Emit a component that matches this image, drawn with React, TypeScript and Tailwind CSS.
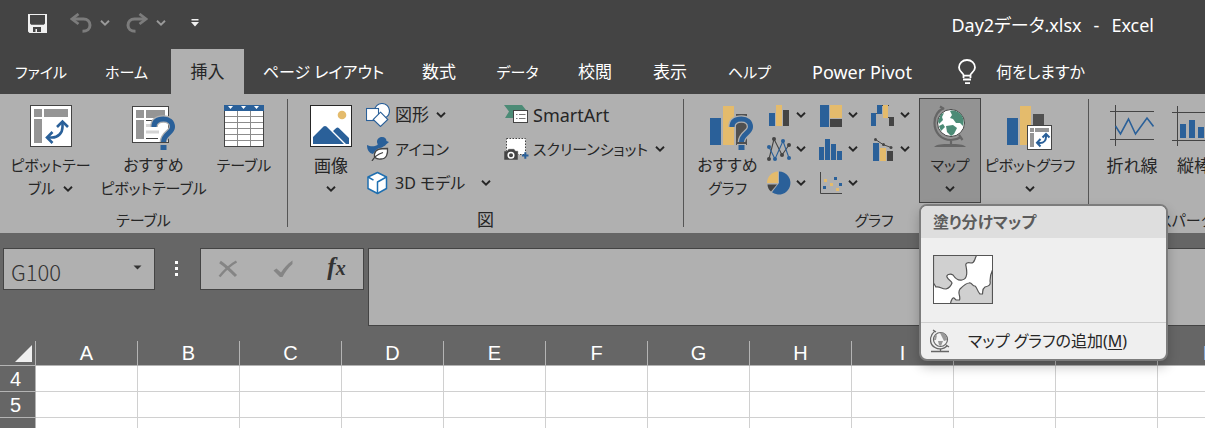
import type { ReactNode } from "react";

const INK = "#262626";
const BLUE = "#2a6099";
const GOLD = "#e4bb6c";
const DARK = "#444444";

function Chevron({ color = INK }: { color?: string }) {
  return (
    <svg width="10" height="6" viewBox="0 0 10 6" fill="none" stroke={color} strokeWidth="1.9" aria-hidden="true">
      <path d="M1 0.8 5 4.6 9 0.8" />
    </svg>
  );
}

/* ---------- title bar icons ---------- */

function SaveIcon() {
  return (
    <svg width="19" height="19" viewBox="0 0 19 19" aria-hidden="true">
      <path fill="#f0f0f0" fillRule="evenodd" d="M0 0H19V19H1.5L0 17.5ZM2 1V9.5L3.2 10.7H15.8L17 9.5V1ZM5 13V18H7.5V15H9V18H13V13Z" />
    </svg>
  );
}

function UndoIcon({ flip = false }: { flip?: boolean }) {
  return (
    <svg width="22" height="20" viewBox="0 0 22 20" fill="none" stroke="#7c7c7c" strokeWidth="3" className={flip ? "-scale-x-100" : ""} aria-hidden="true">
      <path d="M8.5 1 2 6 8.5 11" strokeWidth="2.8" />
      <path d="M2 6H13.5C17.5 6 20 8.7 20 12.2C20 15.7 17.3 18.2 12.5 18.2" />
    </svg>
  );
}

function CustomizeIcon() {
  return (
    <svg width="8" height="8" viewBox="0 0 8 8" fill="#f0f0f0" aria-hidden="true">
      <path d="M0.5 0H7.5V1.4H0.5ZM0 3H8L4 7.5Z" />
    </svg>
  );
}

function BulbIcon() {
  return (
    <svg width="20" height="26" viewBox="0 0 20 26" fill="none" stroke="#fff" strokeWidth="1.8" aria-hidden="true">
      <path d="M6.5 19V16C6.5 14 2 12.5 2 8.5A8 7.5 0 0 1 18 8.5C18 12.5 13.5 14 13.5 16V19" />
      <path d="M6 16.7H14M6 20.5H14M8 24.2H13" />
    </svg>
  );
}

/* ---------- large ribbon icons ---------- */

function PivotTableIcon() {
  return (
    <svg width="42" height="42" viewBox="0 0 42 42" aria-hidden="true">
      <rect x="0.5" y="0.5" width="41" height="41" fill="#fff" stroke={DARK} />
      <path fill="#959595" d="M4 4H12V12H4ZM14 4H38V12H14ZM4 14H12V38H4Z" />
      <g stroke={BLUE} fill="none" strokeWidth="2.6">
        <path d="M17.5 32.5H22C28 32.5 32.5 28 32.5 22V18" />
        <path d="M22.500 27 17 32.500 22.500 38M27 22 32.500 16.500 38 22" />
      </g>
    </svg>
  );
}

function Question() {
  return (
    <>
      <path d="M22 22C22 16 26 14 31.500 14C37 14 40.500 17 40.500 22C40.500 28 31.500 29 31.500 37" fill="none" stroke="#b0b0b0" strokeWidth="7.600" />
      <path d="M27 39H36V46H27Z" fill="#b0b0b0" />
      <path d="M22 22C22 16 26 14 31.500 14C37 14 40.500 17 40.500 22C40.500 28 31.500 29 31.500 37" fill="none" stroke={BLUE} strokeWidth="5" />
      <path d="M28.500 40H34.500V45H28.500Z" fill={BLUE} />
    </>
  );
}

function RecommendedPivotIcon() {
  return (
    <svg width="44" height="46" viewBox="0 0 44 46" aria-hidden="true">
      <rect x="0.500" y="1.500" width="36" height="36" fill="#fff" stroke={DARK} />
      <path fill="#959595" d="M4 5H12V13H4ZM14 5H33V13H14ZM4 15H12V34H4Z" />
      <path d="M14 15.500H22M14 33.500H26" stroke={DARK} />
      <path d="M14 20.500H21M14 27H27" stroke="#d4d4d4" strokeWidth="3" />
      <Question />
    </svg>
  );
}

function TableIcon() {
  return (
    <svg width="40" height="42" viewBox="0 0 40 42" aria-hidden="true">
      <rect x="0.500" y="0.500" width="39" height="41" fill="#fff" stroke={DARK} />
      <path fill={BLUE} d="M0 0H40V6H0Z" />
      <path fill="#fff" d="M4 1H9L6.500 4ZM17 1H22L19.500 4ZM30 1H35L32.500 4Z" />
      <path d="M1 11.500H39M1 17.500H39M1 23.500H39M1 29.500H39M1 35.500H39M13.500 6V41M26.500 6V41" stroke="#8c8c8c" />
    </svg>
  );
}

function PictureIcon() {
  return (
    <svg width="42" height="42" viewBox="0 0 42 42" aria-hidden="true">
      <rect x="0.500" y="0.500" width="41" height="41" fill="#fff" stroke={INK} />
      <circle cx="32" cy="10" r="4.300" fill={GOLD} />
      <path fill={BLUE} d="M3 39V32L13.500 21.500Q15 20.300 16.500 21.500L34 39ZM23 26 26 23.200Q27.500 22 29 23.200L39 33V39H36Z" />
    </svg>
  );
}

function RecommendedChartIcon() {
  return (
    <svg width="44" height="46" viewBox="0 0 44 46" className="ml-2" aria-hidden="true">
      <path fill={BLUE} d="M0 13H11V40H0Z" />
      <path fill={GOLD} d="M13 1H24V40H13Z" />
      <path fill="#505050" d="M26 9H37V40H26Z" />
      <Question />
    </svg>
  );
}

function GlobeIcon() {
  return (
    <svg width="34" height="43" viewBox="0 0 34 43" aria-hidden="true">
      <g fill="none" stroke="#666" strokeWidth="2.200">
        <path d="M11 3C4 6 1.500 12 1.500 18C1.500 28 8.500 35 18 35C22 35 25 34 28 32M7 1.500 11 4M26 30 29.500 35M18 35V40" />
      </g>
      <path d="M1 42C4 39 9 39 17 39C25 39 30 39 33 42Z" fill="#666" />
      <circle cx="18" cy="18" r="13.500" fill="#fff" stroke={DARK} />
      <g fill="#4c8b76">
        <path d="M17 6C21 4.500 26 7 28.500 10C31 14 31 17 30 21L27 18L23 18L20 14L17 13L19 10Z" />
        <path d="M8 9 11 8 9 12 10 15 6 19 5 16Z" />
        <path d="M6 21 10 19 12 22 8 26Z" />
        <path d="M13 21 20 20 24 23 21 29 18 31 14 27Z" />
      </g>
    </svg>
  );
}

function PivotChartIcon() {
  return (
    <svg width="46" height="46" viewBox="0 0 46 46" aria-hidden="true">
      <path fill={BLUE} d="M0 13H11V40H0Z" />
      <path fill={GOLD} d="M13 1H24V40H13Z" />
      <path fill="#505050" d="M26 9H37V20H26Z" />
      <rect x="20.500" y="20.500" width="24" height="24" fill="#fff" stroke={DARK} />
      <path fill="#959595" d="M23 23H27V27H23ZM28 23H42V27H28ZM23 28H27V42H23Z" />
      <g fill="none" stroke={BLUE} strokeWidth="2">
        <path d="M31 38H33C37 38 39 35 39 32V30" />
        <path d="M33.500 34 30 37.800 33.500 41.500M35.500 32.500 39 29 42.500 32.500" />
      </g>
    </svg>
  );
}

function LineSparkIcon() {
  return (
    <svg width="44" height="42" viewBox="0 0 44 42" fill="none" aria-hidden="true">
      <path d="M5.500 0V41M0 6.500H44M0 34.500H44" stroke={DARK} />
      <path d="M5.500 21 10.500 29 18.500 14 25.500 29 37 13 43.500 21.500" stroke={BLUE} strokeWidth="1.600" />
    </svg>
  );
}

function ColumnSparkIcon() {
  return (
    <svg width="44" height="42" viewBox="0 0 44 42" fill="none" aria-hidden="true">
      <path d="M5.500 1V41M0 7.500H44M0 35.500H44" stroke={DARK} />
      <path fill={BLUE} d="M8 19H14V33H8ZM17 15H23V33H17ZM26 22H32V33H26ZM35 17H41V33H35Z" />
    </svg>
  );
}

/* ---------- small ribbon icons ---------- */

function ShapesIcon() {
  return (
    <svg width="24" height="24" viewBox="0 0 24 24" fill="#fff" stroke={BLUE} strokeWidth="1.100" aria-hidden="true">
      <circle cx="16" cy="8" r="7.500" />
      <rect x="0.500" y="5.500" width="12" height="12" />
      <path d="M14.500 9.200 21.800 16.500 14.500 23.500 7.200 16.500Z" />
    </svg>
  );
}

function IconsIcon() {
  return (
    <svg width="24" height="24" viewBox="0 0 24 24" aria-hidden="true">
      <path fill={BLUE} d="M11 5C11 1.500 13.500 0 16 0C19 0 20.500 2 20.500 4L23 5L20 7.500C19 9 18 9 16 10.500C10 11 8 16 7 17C3 16 1 13 1 8C4 9.500 8 10 11.500 8C12 7 11 6 11 5Z" />
      <path d="M21.500 11.500C22 17 20.500 22 15 22C9 22.500 8 20 8.500 17C9.500 12 14 11.500 21.500 11.500Z" fill="#fff" stroke={DARK} strokeWidth="1.300" />
      <path d="M6 24C8 20 11 17.500 17 15.500" fill="none" stroke={DARK} strokeWidth="1.300" />
    </svg>
  );
}

function CubeIcon() {
  return (
    <svg width="24" height="24" viewBox="0 0 24 24" fill="#fff" stroke="#1f6fb0" strokeWidth="1.500" strokeLinejoin="round" aria-hidden="true">
      <path d="M11.500 1.500 20.500 6V17.500L11.500 22.500 2 17.500V6Z" />
      <path d="M2 6 7.500 9.200M20.500 6 11.500 11V22.500" fill="none" />
    </svg>
  );
}

function SmartArtIcon() {
  return (
    <svg width="25" height="22" viewBox="0 0 25 22" aria-hidden="true">
      <path fill="#4c8b76" d="M0 1H18L22 6H9V14H1L5 7.500Z" />
      <rect x="9.500" y="6.500" width="14" height="12" fill="#fff" stroke={DARK} />
      <path d="M12 10.500H13.500M15 10.500H21.500M12 14.500H13.500M15 14.500H21.500" stroke="#777" />
    </svg>
  );
}

function ScreenshotIcon() {
  return (
    <svg width="25" height="24" viewBox="0 0 25 24" aria-hidden="true">
      <rect x="2.500" y="1.500" width="19" height="16" fill="#fff" stroke={DARK} strokeDasharray="1.500 1.500" />
      <path fill={DARK} d="M0 14H3L4.500 12H10L11.500 14H14V23H0Z" stroke="#b0b0b0" strokeWidth="0.500" />
      <circle cx="7" cy="18.300" r="2.800" fill="none" stroke="#fff" strokeWidth="1.500" />
      <path d="M18 18.500H24.500M21.300 15.300V21.700" stroke={BLUE} strokeWidth="2" />
    </svg>
  );
}

function ColumnChartIcon() {
  return (
    <svg width="24" height="24" viewBox="0 0 24 24" aria-hidden="true">
      <path fill={BLUE} d="M2 10H8V23H2Z" />
      <path fill={GOLD} d="M9 2H15V23H9Z" />
      <path fill={DARK} d="M16 7H22V23H16Z" />
    </svg>
  );
}

function TreemapIcon() {
  return (
    <svg width="24" height="24" viewBox="0 0 24 24" aria-hidden="true">
      <path fill={BLUE} d="M1 2H10V24H1Z" />
      <path fill={GOLD} d="M11 2H23V15H11Z" />
      <path fill={DARK} d="M11 16H23V24H11Z" />
    </svg>
  );
}

function WaterfallIcon() {
  return (
    <svg width="24" height="24" viewBox="0 0 24 24" aria-hidden="true">
      <path d="M5.500 10V10.500H11M10 2.500H18M17 14.500H20" stroke={DARK} />
      <path fill={BLUE} d="M0 10H5V23H0ZM6 2H11V11H6Z" />
      <path fill={GOLD} d="M12 2H17V15H12Z" />
      <path fill={DARK} d="M18 14H23V23H18Z" />
    </svg>
  );
}

function LineChartIcon() {
  return (
    <svg width="24" height="24" viewBox="0 0 24 24" aria-hidden="true">
      <path d="M2 22 7 2 15 18 22 8" fill="none" stroke={DARK} strokeWidth="1.100" />
      <path d="M2 10 8 22 16 4 22 21" fill="none" stroke={BLUE} strokeWidth="1.100" />
      <g fill={DARK}>
        <circle cx="2" cy="22" r="2" /><circle cx="7" cy="2" r="2" /><circle cx="15" cy="18" r="2" /><circle cx="22" cy="8" r="2" />
      </g>
      <g fill={BLUE}>
        <circle cx="2" cy="10" r="2" /><circle cx="8" cy="22" r="2" /><circle cx="16" cy="4" r="2" /><circle cx="22" cy="21" r="2" />
      </g>
    </svg>
  );
}

function HistogramIcon() {
  return (
    <svg width="24" height="24" viewBox="0 0 24 24" aria-hidden="true">
      <path fill={BLUE} d="M0 10H5V23H0ZM6 2H11V23H6ZM12 7H17V23H12ZM18 14H23V23H18Z" />
    </svg>
  );
}

function ComboIcon() {
  return (
    <svg width="24" height="24" viewBox="0 0 24 24" aria-hidden="true">
      <path fill={BLUE} d="M2 6H8V24H2Z" />
      <path fill={GOLD} d="M9 11H15V24H9Z" />
      <path fill={DARK} d="M16 14H22V24H16Z" />
      <path d="M4.500 2.500 12 7.500 20 10.500" fill="none" stroke={DARK} />
      <g fill={DARK}>
        <circle cx="4.500" cy="2.500" r="1.500" /><circle cx="12.500" cy="7.500" r="1.500" /><circle cx="20" cy="10.500" r="1.500" />
      </g>
    </svg>
  );
}

function PieIcon() {
  return (
    <svg width="24" height="24" viewBox="0 0 24 24" aria-hidden="true">
      <path fill={BLUE} d="M12 12V0.500A11.500 11.500 0 1 1 5 21.200Z" />
      <path fill={GOLD} d="M11 12H0A11.500 11.500 0 0 1 11 0.500Z" />
      <path fill={DARK} d="M10 13.500 4 20.500C1.500 18.500 0.500 16 0.500 13.500Z" />
    </svg>
  );
}

function ScatterIcon() {
  return (
    <svg width="24" height="24" viewBox="0 0 24 24" aria-hidden="true">
      <path d="M1.500 1V22.500H23" fill="none" stroke={DARK} />
      <path fill={BLUE} d="M15 6H18V9H15ZM20 12H23V15H20ZM4 15H7V18H4Z" />
      <path fill={GOLD} d="M5 8H8V11H5ZM11 12H14V15H11ZM17 17H20V20H17Z" />
    </svg>
  );
}

/* ---------- menu drawings ---------- */

function MapThumb() {
  return (
    <svg width="60" height="49" viewBox="0 0 60 49" aria-hidden="true">
      <rect x="0.500" y="0.500" width="59" height="48" fill="#fff" />
      <g fill="#d0d0d0" stroke="#555" strokeWidth="1.200">
        <path d="M0.500 0.500H43.500C41 5 42 8 38 8C35 7 32 8 33 11C34 16 35 24 29 25C25 26 22 23 20 20C17 18 13 20 14 22C15 25 19 26 19 28C18 31 16 33 13 34C8 34 7 31 3 32L0.500 28Z" />
        <path d="M17.500 48.500C18 45 20 42 21 43L23 45L26.500 45C28 41 24 38 27 34C30 31 33 28 36 28C39 27 39 31 42 31C44 32 44 36 47 39L49.500 39C50 36 49 34 52 32C56 31 58 30 57 26C57 22 57 20 59.500 15V48.500Z" />
      </g>
      <rect x="0.500" y="0.500" width="59" height="48" fill="none" stroke="#555" />
    </svg>
  );
}

function SmallGlobe() {
  return (
    <svg width="20" height="24" viewBox="0 0 20 24" aria-hidden="true">
      <path d="M5 2C-1 7-1 15 5 18.500C9 21 14 20 17 17M3 1 6 3M16 16 19 18M10.500 20V22M1 22.500H19" fill="none" stroke="#666" strokeWidth="1.300" />
      <circle cx="10.500" cy="10.500" r="7" fill="#f4f4f4" stroke="#666" strokeWidth="1.200" />
      <path fill="#999" d="M10 4C14 3 17 7 17 11L14 12L12 8ZM5 7 7 6 6 11 4 11ZM8 12H13L11 17 9 16Z" />
    </svg>
  );
}

/* ---------- ribbon building blocks ---------- */

function labelSize(label: string) {
  if (/^[A-Za-z ]+$/.test(label)) return "text-[18px]";
  if (/[\u4e00-\u9fff]/.test(label)) return "text-[17px]";
  if (/^[\u30a0-\u30ff]+$/.test(label)) return "text-[15px]";
  return "text-[16px]";
}

function Group({ label, className, labelClass = "", children }: { label: string; className: string; labelClass?: string; children: ReactNode }) {
  return (
    <section aria-label={label} className={`flex shrink-0 flex-col ${className}`}>
      <div className="flex h-[110px] items-start">{children}</div>
      <div className={`text-center leading-6 ${labelSize(label)} ${labelClass}`}>{label}</div>
    </section>
  );
}

function Separator() {
  return <div className="mt-[5px] h-[128px] w-px shrink-0 bg-[#555]" />;
}

function BigButton({ icon, lines, className, arrow }: { icon: ReactNode; lines: string[]; className: string; arrow?: "inline" | "below" }) {
  return (
    <button type="button" className={`flex shrink-0 flex-col items-center whitespace-nowrap ${className}`}>
      <span className="flex h-[49px] items-start">{icon}</span>
      {lines.map((line, i) => (
        <span key={line} className={`flex h-[23px] items-center gap-2 leading-[23px] ${labelSize(line)}`}>
          {line}
          {arrow === "inline" && i === lines.length - 1 && <Chevron />}
        </span>
      ))}
      {arrow === "below" && <span className="flex h-[23px] items-center"><Chevron /></span>}
    </button>
  );
}

function SmallButton({ icon, label, arrow }: { icon: ReactNode; label: string; arrow?: "near" | "far" }) {
  return (
    <button type="button" className="flex h-[34px] items-center gap-1 whitespace-nowrap">
      <span className="flex w-[25px] justify-start">{icon}</span>
      <span className={labelSize(label)}>{label}</span>
      {arrow && <span className={arrow === "far" ? "pl-3" : "pl-[3px]"}><Chevron /></span>}
    </button>
  );
}

const chartButtons: { name: string; icon: ReactNode }[] = [
  { name: "縦棒", icon: <ColumnChartIcon /> },
  { name: "階層構造", icon: <TreemapIcon /> },
  { name: "ウォーターフォール", icon: <WaterfallIcon /> },
  { name: "折れ線", icon: <LineChartIcon /> },
  { name: "統計", icon: <HistogramIcon /> },
  { name: "複合", icon: <ComboIcon /> },
  { name: "円", icon: <PieIcon /> },
  { name: "散布図", icon: <ScatterIcon /> },
];

const tabs = [
  { name: "ファイル", width: "w-[82px]" },
  { name: "ホーム", width: "w-[89px]" },
  { name: "挿入", width: "w-[73px]", active: true },
  { name: "ページ レイアウト", width: "w-[159px]" },
  { name: "数式", width: "w-[72px]" },
  { name: "データ", width: "w-[85px]" },
  { name: "校閲", width: "w-[70px]" },
  { name: "表示", width: "w-[80px]" },
  { name: "ヘルプ", width: "w-[79px]" },
  { name: "Power Pivot", width: "w-[146px]" },
];

function TitleBar() {
  return (
    <header className="flex h-[49px] items-center justify-between pl-7 pr-[51px] text-white">
      <div className="flex items-center pb-[3px]">
        <button type="button" aria-label="上書き保存"><SaveIcon /></button>
        <button type="button" aria-label="元に戻す" className="ml-[23px] flex items-center gap-2"><UndoIcon /><Chevron color="#9a9a9a" /></button>
        <button type="button" aria-label="やり直し" className="ml-4 flex items-center gap-2"><UndoIcon flip /><Chevron color="#9a9a9a" /></button>
        <button type="button" aria-label="クイック アクセス ツール バーのユーザー設定" className="ml-[25px]"><CustomizeIcon /></button>
      </div>
      <h1 className="flex gap-3 text-[18px]"><span>Day2データ.xlsx</span><span>-</span><span>Excel</span></h1>
    </header>
  );
}

function TabBar() {
  return (
    <nav className="flex h-[45px] whitespace-nowrap text-white">
      {tabs.map((tab) => (
        <button
          key={tab.name}
          type="button"
          className={`shrink-0 text-center ${labelSize(tab.name)} ${tab.width} ${tab.active ? "bg-[#b0b0b0] text-[#262626]" : ""}`}
        >
          {tab.name}
        </button>
      ))}
      <button type="button" className="ml-[22px] flex shrink-0 items-center gap-[19px]"><BulbIcon />何をしますか</button>
    </nav>
  );
}

function MapMenu() {
  return (
    <div className="absolute left-0 top-full z-10 mt-px w-[249px] overflow-hidden rounded-lg border-2 border-[#7c7c7c] bg-[#efefef] text-left shadow-[0_6px_12px_rgba(0,0,0,0.22)]">
      <h2 className="bg-[#dedede] px-3 font-bold leading-8 text-[#5c5c5c]">塗り分けマップ</h2>
      <div className="flex h-[84px] items-start px-3 pt-[17px]">
        <button type="button" aria-label="塗り分けマップ"><MapThumb /></button>
      </div>
      <button type="button" className="flex h-[37px] w-full items-center gap-[18px] whitespace-nowrap border-t border-[#cfcfcf] px-[9px] text-[#262626]">
        <SmallGlobe />
        <span>マップ グラフの追加(<u className="underline-offset-2">M</u>)</span>
      </button>
    </div>
  );
}

function Ribbon() {
  return (
    <div className="flex h-[139px] bg-[#b0b0b0] text-[#262626]">
      <Group label="テーブル" className="w-[287px] pt-1">
        <BigButton className="w-[101px] pt-[7px]" icon={<PivotTableIcon />} lines={["ピボットテー", "ブル"]} arrow="inline" />
        <BigButton className="w-[105px] pt-[7px]" icon={<RecommendedPivotIcon />} lines={["おすすめ", "ピボットテーブル"]} />
        <BigButton className="w-[76px] pt-[7px]" icon={<TableIcon />} lines={["テーブル"]} />
      </Group>
      <Separator />
      <Group label="図" className="w-[395px] pt-1">
        <BigButton className="ml-3 w-[62px] pt-[7px]" icon={<PictureIcon />} lines={["画像"]} arrow="below" />
        <div className="ml-1 w-[138px]">
          <SmallButton icon={<ShapesIcon />} label="図形" arrow="near" />
          <SmallButton icon={<IconsIcon />} label="アイコン" />
          <SmallButton icon={<CubeIcon />} label="3D モデル" arrow="far" />
        </div>
        <div>
          <SmallButton icon={<SmartArtIcon />} label="SmartArt" />
          <SmallButton icon={<ScreenshotIcon />} label="スクリーンショット" arrow="near" />
        </div>
      </Group>
      <Separator />
      <Group label="グラフ" className="w-[404px] pt-1" labelClass="pr-6">
        <BigButton className="w-[83px] pl-1 pt-[7px]" icon={<RecommendedChartIcon />} lines={["おすすめ", "グラフ"]} />
        <div className="grid w-[152px] grid-cols-[52px_52px_48px]">
          {chartButtons.map((b) => (
            <button key={b.name} type="button" aria-label={b.name} className="flex h-[34px] items-center gap-[5px]">
              {b.icon}
              <Chevron />
            </button>
          ))}
        </div>
        <div className="relative">
          <BigButton className="h-[105px] w-[62px] border border-[#444] bg-[#939393] pt-[6px]" icon={<GlobeIcon />} lines={["マップ"]} arrow="below" />
          <MapMenu />
        </div>
        <BigButton className="w-[98px] pt-[7px]" icon={<PivotChartIcon />} lines={["ピボットグラフ"]} arrow="below" />
      </Group>
      <Separator />
      <Group label="スパークライン" className="w-[234px] pt-1">
        <BigButton className="ml-3 w-[62px] pt-[7px]" icon={<LineSparkIcon />} lines={["折れ線"]} />
        <BigButton className="w-[62px] pt-[7px]" icon={<ColumnSparkIcon />} lines={["縦棒"]} />
      </Group>
    </div>
  );
}

function FormulaBar() {
  return (
    <div className="flex h-[108px] items-start bg-[#666] pl-[3px] pt-[15px]">
      <div className="flex h-[42px] w-[152px] shrink-0 items-center border border-[#444] bg-[#b0b0b0]">
        <input aria-label="名前ボックス" defaultValue="G100" className="h-full min-w-0 grow bg-transparent pl-[7px] pt-1 font-['Noto_Sans_CJK_JP',sans-serif] text-[22px] font-light text-[#333] outline-none" />
        <button type="button" aria-label="名前の一覧" className="px-3 pb-1">
          <svg width="9" height="5" viewBox="0 0 9 5" fill="#333" aria-hidden="true"><path d="M0.500 0.500H8.500L4.500 4.500Z" /></svg>
        </button>
      </div>
      <div className="ml-5 mt-[13px] flex w-[3px] shrink-0 flex-col gap-[3px]">
        <i className="h-[3px] bg-white" />
        <i className="h-[3px] bg-white" />
        <i className="h-[3px] bg-white" />
      </div>
      <div className="ml-[22px] flex h-[42px] w-[164px] shrink-0 items-center justify-around border border-[#444] bg-[#b0b0b0]">
        <button type="button" aria-label="キャンセル">
          <svg width="20" height="18" viewBox="0 0 20 18" fill="none" stroke="#858585" aria-hidden="true"><path d="M2 2C8 6 13 11 18 16" strokeWidth="3" /><path d="M18.500 1.500C12 5 6 11 1.500 16.500" strokeWidth="2.400" /></svg>
        </button>
        <button type="button" aria-label="入力">
          <svg width="20" height="18" viewBox="0 0 20 18" fill="#858585" aria-hidden="true"><path d="M0.500 10.500 3.500 8.500 8 12.500C11 8 14 4 19.500 0.500V4C15 8 12 12 9.500 17H7Z" /></svg>
        </button>
        <button type="button" aria-label="関数の挿入" className="pb-0.5 font-['Liberation_Serif',serif] text-[25px] font-bold italic leading-6 text-[#333]">
          f<span className="text-xl">x</span>
        </button>
      </div>
      <textarea aria-label="数式バー" className="ml-1 h-[78px] min-w-0 grow resize-none border border-r-0 border-[#444] bg-[#b0b0b0] p-2 outline-none" />
    </div>
  );
}

const columns = ["A", "B", "C", "D", "E", "F", "G", "H", "I", "J", "K", "L", "M", "N", "O", "P"];
const rows = [
  { number: 4, height: "h-[26px]" },
  { number: 5, height: "h-[26px]" },
  { number: 6, height: "h-[52px]" },
];

function Sheet() {
  return (
    <table className="w-max table-fixed border-separate border-spacing-0 bg-white font-['Liberation_Sans',sans-serif] text-xl leading-6">
      <thead>
        <tr className="h-[25px] bg-[#666] text-white">
          <th className="w-9 min-w-9 border-b border-r border-[#b4b4b4] p-0">
            <button type="button" aria-label="すべて選択" className="flex w-full justify-end pr-[3px]">
              <svg width="17" height="17" viewBox="0 0 17 17" fill="#f0f0f0" aria-hidden="true"><path d="M17 0V17H0Z" /></svg>
            </button>
          </th>
          {columns.map((c) => (
            <th key={c} scope="col" className="w-[102px] min-w-[102px] border-b border-r border-[#b4b4b4] p-0 font-normal">{c}</th>
          ))}
        </tr>
      </thead>
      <tbody>
        {rows.map((r) => (
          <tr key={r.number} className={r.height}>
            <th scope="row" className="border-b border-r border-[#b4b4b4] bg-[#666] p-0 pr-1 font-normal text-white">{r.number}</th>
            {columns.map((c) => (
              <td key={c} className="border-b border-r border-[#d0d0d0] p-0" />
            ))}
          </tr>
        ))}
      </tbody>
    </table>
  );
}

export default function App() {
  return (
    <div className="h-screen overflow-hidden bg-[#444] font-['Noto_Sans','Noto_Sans_CJK_JP',sans-serif] text-[16px] leading-6 [font-feature-settings:'palt']">
      <TitleBar />
      <TabBar />
      <Ribbon />
      <FormulaBar />
      <Sheet />
    </div>
  );
}
